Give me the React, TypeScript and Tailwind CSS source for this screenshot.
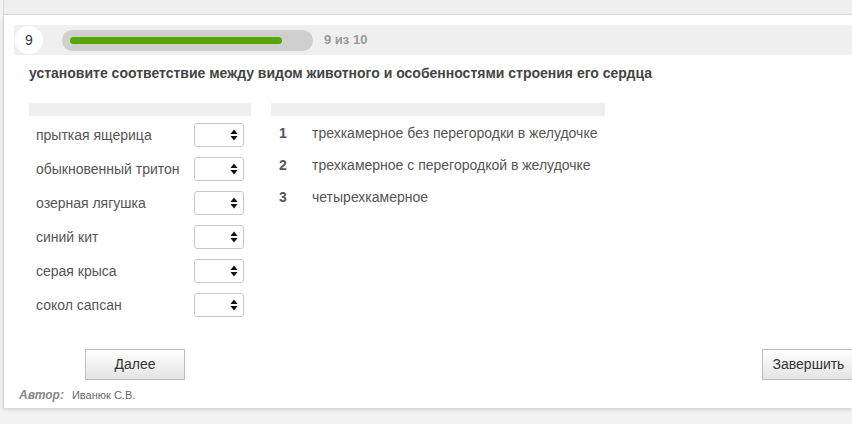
const animals = ["прыткая ящерица", "обыкновенный тритон", "озерная лягушка", "синий кит", "серая крыса", "сокол сапсан"];

const hearts = [
  { n: "1", text: "трехкамерное без перегородки в желудочке" },
  { n: "2", text: "трехкамерное с перегородкой в желудочке" },
  { n: "3", text: "четырехкамерное" },
];

function SelectBox() {
  return (
    <div className="flex h-[24px] w-[50px] items-center justify-end rounded-[3px] border border-[#c8c8c8] bg-white pr-[5px]">
      <svg width="8" height="12" viewBox="0 0 8 12">
        <path d="M4 0.5 L7.5 5 L0.5 5 Z" fill="#111" />
        <path d="M4 11.5 L7.5 7 L0.5 7 Z" fill="#111" />
      </svg>
    </div>
  );
}

export default function App() {
  return (
    <div className="flex h-[424px] w-[852px] flex-col overflow-hidden bg-[#f2f2f2] font-['Liberation_Sans',Arial,sans-serif]">
      <div className="ml-[3px] h-[15px] shrink-0 border-b border-l border-[#d6d6d6] bg-[#efefef]" />

      <div className="ml-[3px] flex h-[393px] shrink-0 flex-col border-l border-[#d6d6d6] bg-white shadow-[0_2px_3px_rgba(0,0,0,0.12)]">
        {/* progress bar */}
        <div className="ml-[10px] mt-[10px] flex h-[30px] items-center bg-[#efefef]">
          <div className="ml-[1px] flex h-[28px] w-[28px] items-center justify-center rounded-full bg-white text-[14px] text-[#333]">
            9
          </div>
          <div className="ml-[19px] flex h-[21px] w-[251px] items-center rounded-full bg-[#cfcfcf] pl-[8px]">
            <div className="h-[7px] w-[212px] rounded-full bg-[#58a700]" />
          </div>
          <span className="ml-[11px] text-[13px] font-bold text-[#9a9a9a]">9 из 10</span>
        </div>

        <h1 className="ml-[25px] mt-[9px] text-[14px] font-bold leading-[18px] text-[#444]">
          установите соответствие между видом животного и особенностями строения его сердца
        </h1>

        <div className="ml-[25px] mt-[21px] flex gap-[20px]">
          <div className="w-[222px]">
            <div className="h-[13px] bg-[#eeeeee]" />
            <div className="mt-[7px] flex flex-col gap-[10px]">
              {animals.map((a) => (
                <div key={a} className="flex items-center justify-between pl-[7px] pr-[7px]">
                  <span className="text-[14px] leading-[18px] text-[#555]">{a}</span>
                  <SelectBox />
                </div>
              ))}
            </div>
          </div>

          <div className="w-[334px]">
            <div className="h-[13px] bg-[#eeeeee]" />
            <div className="mt-[8px] flex flex-col gap-[14px]">
              {hearts.map((h) => (
                <div key={h.n} className="flex items-center pl-[8px] text-[14px] leading-[18px] text-[#555]">
                  <span className="w-[33px] font-bold">{h.n}</span>
                  <span>{h.text}</span>
                </div>
              ))}
            </div>
          </div>
        </div>

        <div className="mt-auto flex items-center justify-between pl-[81px]">
          <button className="h-[31px] w-[100px] border border-[#bdbdbd] bg-gradient-to-b from-[#ffffff] to-[#e4e4e4] text-[14px] text-[#333]">
            Далее
          </button>
          <button className="-mr-[3px] h-[31px] w-[93px] border border-[#bdbdbd] bg-gradient-to-b from-[#ffffff] to-[#e4e4e4] text-[14px] text-[#333]">
            Завершить
          </button>
        </div>

        <div className="mb-[4px] ml-[15px] mt-[6px] flex items-baseline">
          <span className="text-[12px] font-bold italic text-[#888]">Автор:</span>
          <span className="ml-[8px] text-[11px] text-[#666]">Иванюк С.В.</span>
        </div>
      </div>
    </div>
  );
}
